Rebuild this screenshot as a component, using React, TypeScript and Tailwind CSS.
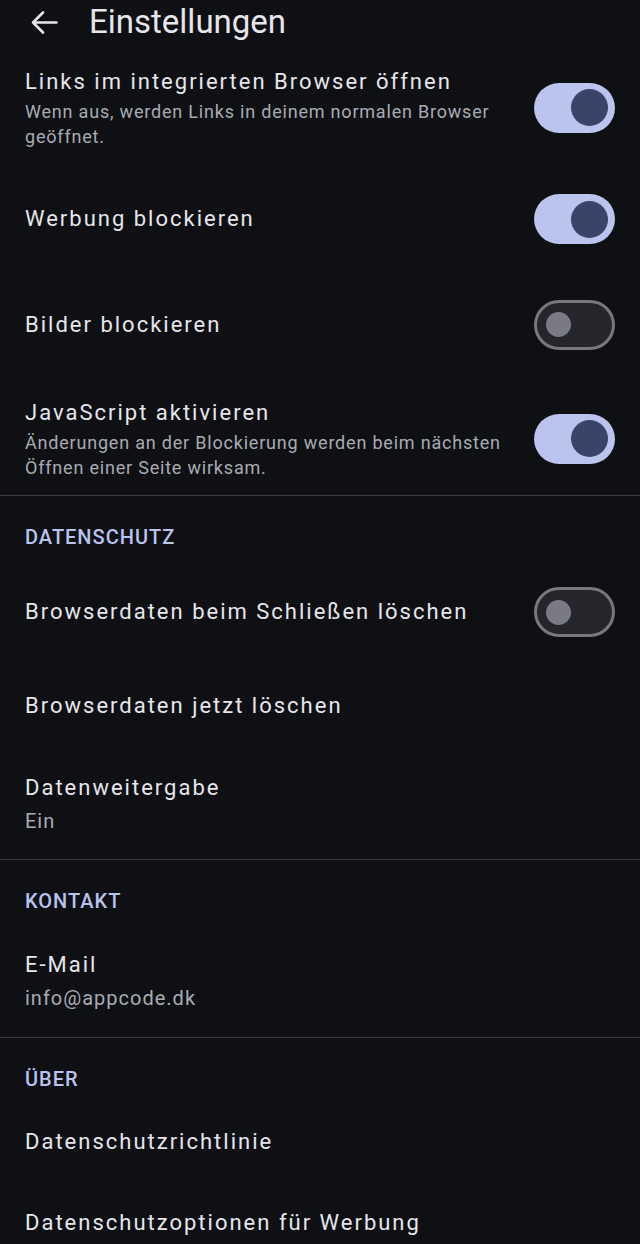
type ToggleProps = { on: boolean };

function Toggle({ on }: ToggleProps) {
  if (on) {
    return (
      <div className="flex h-[50px] w-[81px] shrink-0 items-center justify-end rounded-full bg-[#bac4ef] pr-[7px]">
        <div className="h-[37px] w-[37px] rounded-full bg-[#384468]" />
      </div>
    );
  }
  return (
    <div className="flex h-[50px] w-[81px] shrink-0 items-center rounded-full border-[3px] border-[#77787f] bg-[#24262c] pl-[9px]">
      <div className="h-[25px] w-[25px] rounded-full bg-[#797a82]" />
    </div>
  );
}

type RowProps = {
  title: string;
  summary?: string;
  toggle?: boolean;
  wide?: boolean;
  className: string;
};

// wide = summary shown as a value line (bigger, like "Ein" / the mail address)
function Row({ title, summary, toggle, wide, className }: RowProps) {
  return (
    <div className={`flex items-center justify-between px-[25px] ${className}`}>
      <div className="flex min-w-0 flex-1 flex-col pr-[12px]">
        <span className="text-[22px] leading-[30px] tracking-[2px] text-[#e6e6ec]">{title}</span>
        {summary && (
          <span
            className={
              wide
                ? "mt-[6px] text-[20px] leading-[25px] tracking-[1px] text-[#a9abb3]"
                : "mt-[2px] text-[18px] leading-[25px] tracking-[0.8px] text-[#a9abb3]"
            }
          >
            {summary}
          </span>
        )}
      </div>
      {toggle !== undefined && <Toggle on={toggle} />}
    </div>
  );
}

function SectionHeader({ label }: { label: string }) {
  return (
    <div className="h-[63px] pl-[25px] pt-[28px]">
      <span className="block text-[20px] font-medium leading-[26px] tracking-[1px] text-[#b9c3ef]">
        {label}
      </span>
    </div>
  );
}

export default function App() {
  return (
    <div
      className="h-[1244px] w-[640px] overflow-hidden bg-[#0e1014]"
      style={{ fontFamily: "Roboto, 'Noto Sans', sans-serif" }}
    >
      <header className="flex h-[44px] items-center">
        <div className="flex w-[89px] pl-[31px]">
          <svg width="27" height="23" viewBox="0 0 27 23" fill="none">
            <path
              d="M2 11.5H25.5M12 1.5L2 11.5L12 21.5"
              stroke="#e6e6ec"
              strokeWidth="2.6"
              strokeLinecap="round"
              strokeLinejoin="round"
            />
          </svg>
        </div>
        <h1 className="text-[33px] leading-[40px] text-[#e6e6ec]">Einstellungen</h1>
      </header>

      <Row
        className="h-[127px]"
        title="Links im integrierten Browser öffnen"
        summary="Wenn aus, werden Links in deinem normalen Browser geöffnet."
        toggle={true}
      />
      <Row className="h-[96px]" title="Werbung blockieren" toggle={true} />
      <Row className="h-[115px]" title="Bilder blockieren" toggle={false} />
      <Row
        className="h-[113px]"
        title="JavaScript aktivieren"
        summary="Änderungen an der Blockierung werden beim nächsten Öffnen einer Seite wirksam."
        toggle={true}
      />
      <div className="h-px bg-[#3a3c42]" />

      <SectionHeader label="DATENSCHUTZ" />
      <Row className="h-[106px]" title="Browserdaten beim Schließen löschen" toggle={false} />
      <Row className="h-[82px]" title="Browserdaten jetzt löschen" />
      <Row className="h-[112px]" title="Datenweitergabe" summary="Ein" wide />
      <div className="h-px bg-[#3a3c42]" />

      <SectionHeader label="KONTAKT" />
      <Row className="h-[114px]" title="E-Mail" summary="info@appcode.dk" wide />
      <div className="h-px bg-[#3a3c42]" />

      <SectionHeader label="ÜBER" />
      <Row className="h-[81px]" title="Datenschutzrichtlinie" />
      <Row className="h-[81px]" title="Datenschutzoptionen für Werbung" />
    </div>
  );
}
